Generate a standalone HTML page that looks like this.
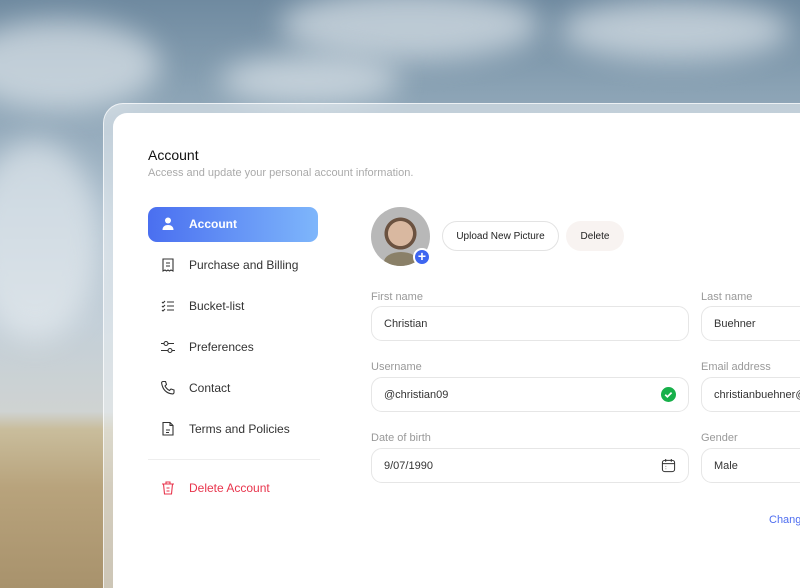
<!DOCTYPE html>
<html style="width:800px;height:588px;overflow:hidden;background:#9a8868"><head><meta charset="utf-8"><style>
*{margin:0;padding:0;box-sizing:border-box}
body{width:800px;height:588px;overflow:hidden;position:relative;font-family:"Liberation Sans",sans-serif;
background:linear-gradient(180deg,#6f8aa0 0%,#8aa2b4 15%,#a9bccb 35%,#c3cfd8 55%,#cfd3d2 70%,#c9bd9c 73%,#b8a37c 83%,#a8926c 100%);}
.cloud{position:absolute;border-radius:50%;background:rgba(235,240,244,.6);filter:blur(14px)}
.glass{position:absolute;left:103px;top:103px;width:697px;height:485px;border-radius:20px 0 0 0;background:rgba(235,240,244,.55);border:1px solid rgba(255,255,255,.7);border-right:none;border-bottom:none}
.card{position:absolute;left:113px;top:113px;width:687px;height:475px;border-radius:14px 0 0 0;background:#fff}
.t{position:absolute;white-space:nowrap}
.nav{position:absolute;left:148px;width:170px;height:35px;font-size:12px;color:#333}
.nav svg{position:absolute;left:12px;top:9px}
.nav span{position:absolute;left:41px;top:10px}
.lbl{position:absolute;font-size:11px;color:#999}
.inp{position:absolute;height:35px;border:1px solid #e6e6e6;border-radius:11px;font-size:11px;color:#333;padding:11px 0 0 12px;background:#fff;overflow:hidden;white-space:nowrap}
.btn{position:absolute;height:30px;border-radius:15px;font-size:10px;color:#222;display:flex;align-items:center;justify-content:center}
</style></head><body>
<div class="cloud" style="left:-40px;top:20px;width:200px;height:90px"></div>
<div class="cloud" style="left:280px;top:-10px;width:260px;height:70px"></div>
<div class="cloud" style="left:560px;top:0px;width:230px;height:60px"></div>
<div class="cloud" style="left:220px;top:55px;width:180px;height:50px"></div>
<div class="cloud" style="left:-30px;top:140px;width:130px;height:200px"></div>
<div class="glass"></div>
<div class="card"></div>
<div class="t" style="left:148px;top:147px;font-size:14px;color:#111">Account</div>
<div class="t" style="left:148px;top:167px;font-size:11px;color:#aaa">Access and update your personal account information.</div>

<div class="nav" style="top:207px;border-radius:9px;background:linear-gradient(90deg,#4a6ff0,#7eb6fb);color:#fff;font-weight:bold">
<svg width="16" height="16" viewBox="0 0 16 16"><circle cx="8" cy="4.5" r="3" fill="#fff"/><path d="M2.5 14c0-3.5 2.5-5 5.5-5s5.5 1.5 5.5 5z" fill="#fff"/></svg><span>Account</span></div>
<div class="nav" style="top:248px"><svg width="16" height="16" viewBox="0 0 16 16" fill="none" stroke="#333" stroke-width="1.1"><path d="M3 2h10v12l-2-1-1.5 1-1.5-1-1.5 1L5 13l-2 1z"/><path d="M6 6h4M6 9h4"/></svg><span>Purchase and Billing</span></div>
<div class="nav" style="top:289px"><svg width="16" height="16" viewBox="0 0 16 16" fill="none" stroke="#333" stroke-width="1.1"><path d="M2 4l1 1 2-2M2 8l1 1 2-2M2 12l1 1 2-2M7 4h7M7 8h7M7 12h7"/></svg><span>Bucket-list</span></div>
<div class="nav" style="top:330px"><svg width="16" height="16" viewBox="0 0 16 16" fill="none" stroke="#333" stroke-width="1.1"><circle cx="6" cy="4.5" r="2"/><circle cx="10" cy="11.5" r="2"/><path d="M1 4.5h3M8 4.5h6M1 11.5h7M12 11.5h3"/></svg><span>Preferences</span></div>
<div class="nav" style="top:371px"><svg width="16" height="16" viewBox="0 0 16 16" fill="none" stroke="#333" stroke-width="1.1"><path d="M3 1.5l2.5 0 1 3-1.5 1.5c1 2 2.5 3.5 4.5 4.5l1.5-1.5 3 1v2.5c0 .8-.8 1.5-1.6 1.4C6.5 13.3 2.7 9.5 1.6 3.1 1.5 2.3 2.2 1.5 3 1.5z"/></svg><span>Contact</span></div>
<div class="nav" style="top:412px"><svg width="16" height="16" viewBox="0 0 16 16" fill="none" stroke="#333" stroke-width="1.1"><path d="M3 1.5h7l3 3v9.5H3z"/><path d="M10 1.5v3h3M6 9h4M6 11.5h3"/></svg><span>Terms and Policies</span></div>
<div style="position:absolute;left:148px;top:459px;width:172px;height:1px;background:#eee"></div>
<div class="nav" style="top:471px;color:#e8344c"><svg width="16" height="16" viewBox="0 0 16 16" fill="none" stroke="#e8344c" stroke-width="1.1"><path d="M2 4h12M6 4V2h4v2M3.5 4l1 10h7l1-10M6.5 8h3M6.5 11h3"/></svg><span>Delete Account</span></div>

<div style="position:absolute;left:371px;top:207px;width:59px;height:59px;border-radius:50%;background:radial-gradient(circle at 50% 45%,#d9b8a0 0 28%,#6b5240 29% 36%,#b8b8b8 37%);overflow:hidden">
<div style="position:absolute;left:13px;top:45px;width:34px;height:20px;border-radius:50% 50% 0 0;background:#8a8068"></div></div>
<div style="position:absolute;left:413px;top:248px;width:18px;height:18px;border-radius:50%;background:#3e66f0;border:2px solid #fff;color:#fff;font-size:14px;line-height:13px;text-align:center;font-weight:bold">+</div>
<div class="btn" style="left:442px;top:221px;width:117px;border:1px solid #e3e3e3">Upload New Picture</div>
<div class="btn" style="left:566px;top:221px;width:58px;background:#f8f3f1">Delete</div>

<div class="lbl" style="left:371px;top:291px">First name</div>
<div class="inp" style="left:371px;top:306px;width:318px">Christian</div>
<div class="lbl" style="left:701px;top:291px">Last name</div>
<div class="inp" style="left:701px;top:306px;width:110px">Buehner</div>
<div class="lbl" style="left:371px;top:361px">Username</div>
<div class="inp" style="left:371px;top:377px;width:318px">@christian09
<svg style="position:absolute;left:289px;top:9px" width="15" height="15" viewBox="0 0 16 16"><circle cx="8" cy="8" r="8" fill="#17b04a"/><path d="M4.5 8.2l2.3 2.3 4.5-4.5" fill="none" stroke="#fff" stroke-width="1.8"/></svg></div>
<div class="lbl" style="left:701px;top:361px">Email address</div>
<div class="inp" style="left:701px;top:377px;width:110px">christianbuehner@</div>
<div class="lbl" style="left:371px;top:432px">Date of birth</div>
<div class="inp" style="left:371px;top:448px;width:318px">9/07/1990
<svg style="position:absolute;left:289px;top:9px" width="15" height="15" viewBox="0 0 16 16" fill="none" stroke="#333" stroke-width="1.1"><rect x="1.5" y="2.5" width="13" height="12" rx="2.5"/><path d="M1.5 6h13M5 1v3M11 1v3M5 9h.5M5 11.5h.5"/></svg></div>
<div class="lbl" style="left:701px;top:432px">Gender</div>
<div class="inp" style="left:701px;top:448px;width:110px">Male</div>
<div class="t" style="left:769px;top:514px;font-size:11px;color:#4f6ef0">Chang</div>
</body></html>
